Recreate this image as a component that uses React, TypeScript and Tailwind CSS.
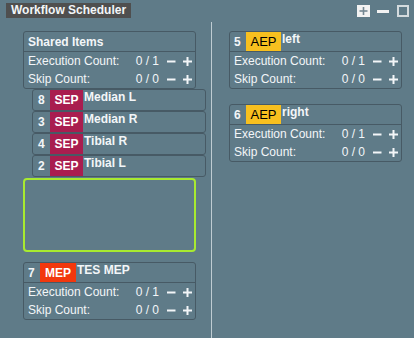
import React from 'react';

const sepItems = [
  { n: 8, label: 'Median L' },
  { n: 3, label: 'Median R' },
  { n: 4, label: 'Tibial R' },
  { n: 2, label: 'Tibial L' },
];

const aepCards = [
  { n: 5, label: 'left' },
  { n: 6, label: 'right' },
];

function MinusIcon() {
  return (
    <svg width="9" height="9" viewBox="0 0 9 9" className="shrink-0">
      <rect x="0" y="3.5" width="8.5" height="2" fill="currentColor" />
    </svg>
  );
}

function PlusIcon() {
  return (
    <svg width="9" height="9" viewBox="0 0 9 9" className="shrink-0">
      <rect x="0" y="3.5" width="9" height="2" fill="currentColor" />
      <rect x="3.5" y="0" width="2" height="9" fill="currentColor" />
    </svg>
  );
}

function CountRow({ label, value }: { label: string; value: string }) {
  return (
    <div className="flex h-[18px] items-center pl-[4px] pr-[3px] text-[12px]">
      <span className="flex-1 whitespace-nowrap">{label}</span>
      <span className="whitespace-nowrap">{value}</span>
      <span className="ml-[8px]">
        <MinusIcon />
      </span>
      <span className="ml-[7px]">
        <PlusIcon />
      </span>
    </div>
  );
}

function Card({ header, className = '' }: { header: React.ReactNode; className?: string }) {
  return (
    <div className={`w-[173px] rounded-[3px] border border-[#475a65] ${className}`}>
      <div className="flex h-[20px] border-b border-[#475a65]">{header}</div>
      <CountRow label="Execution Count:" value="0 / 1" />
      <CountRow label="Skip Count:" value="0 / 0" />
    </div>
  );
}

function BadgeHeader({
  n,
  tag,
  label,
  badgeClass,
}: {
  n: number;
  tag: string;
  label: string;
  badgeClass: string;
}) {
  return (
    <>
      <span className="flex w-[16px] shrink-0 items-center pl-[4px] text-[12px] font-bold">{n}</span>
      <span className={`flex h-full shrink-0 items-center justify-center ${badgeClass}`}>{tag}</span>
      <span className="ml-[1px] self-start whitespace-nowrap text-[12px] font-bold leading-[14px]">{label}</span>
    </>
  );
}

export default function App() {
  return (
    <div className="h-[338px] w-[414px] overflow-hidden bg-[#5f7b88] font-['Liberation_Sans',Arial,sans-serif] text-[#f3f6f8]">
      <div className="flex h-[22px] items-start justify-between">
        <span className="ml-[6px] mt-[3px] h-[15px] whitespace-nowrap bg-[#4f4f4f] px-[5px] text-[12px] font-bold leading-[15px]">
          Workflow Scheduler
        </span>
        <div className="mr-[5px] mt-[5px] flex items-start">
          <svg width="13" height="12" viewBox="0 0 13 12">
            <rect x="0" y="0" width="13" height="12" fill="#f2f2f2" />
            <rect x="2.5" y="5.2" width="8" height="1.6" fill="#748792" />
            <rect x="5.7" y="2" width="1.6" height="8" fill="#748792" />
          </svg>
          <svg width="12" height="12" viewBox="0 0 12 12" className="ml-[7px]">
            <rect x="0" y="5" width="12" height="3" fill="#f2f2f2" />
          </svg>
          <svg width="12" height="12" viewBox="0 0 12 12" className="ml-[8px]">
            <rect x="1" y="1" width="10" height="10" fill="none" stroke="#d3dadd" strokeWidth="2" />
          </svg>
        </div>
      </div>

      <div className="flex h-[316px]">
        <div className="w-[212px] shrink-0 border-r border-r-[#bfccd2] pl-[23px] pt-[9px]">
          <Card
            header={
              <span className="flex items-center pl-[4px] text-[12px] font-bold">Shared Items</span>
            }
          />

          <div className="ml-[9px] w-[174px]">
            {sepItems.map((item) => (
              <div key={item.n} className="flex h-[22px] rounded-[3px] border border-[#475a65]">
                <span className="flex w-[17px] shrink-0 items-center pl-[5px] text-[12px] font-bold">{item.n}</span>
                <span className="flex h-full w-[33px] shrink-0 items-center justify-center bg-[#a91d4f] text-[12px] font-bold text-white">
                  SEP
                </span>
                <span className="ml-[1px] self-start whitespace-nowrap text-[12px] font-bold leading-[14px]">
                  {item.label}
                </span>
              </div>
            ))}
          </div>

          <div className="mt-[1px] h-[74px] w-[173px] rounded-[4px] border-2 border-[#a8ea30]" />

          <Card
            className="mt-[10px]"
            header={
              <BadgeHeader
                n={7}
                tag="MEP"
                label="TES MEP"
                badgeClass="w-[36px] bg-[#f2380e] text-[12px] font-bold text-white"
              />
            }
          />
        </div>

        <div className="flex flex-col gap-[15px] pl-[17px] pt-[9px]">
          {aepCards.map((c) => (
            <Card
              key={c.n}
              header={
                <BadgeHeader
                  n={c.n}
                  tag="AEP"
                  label={c.label}
                  badgeClass="w-[35px] bg-[#f8c01f] text-[13px] text-black"
                />
              }
            />
          ))}
        </div>
      </div>
    </div>
  );
}
